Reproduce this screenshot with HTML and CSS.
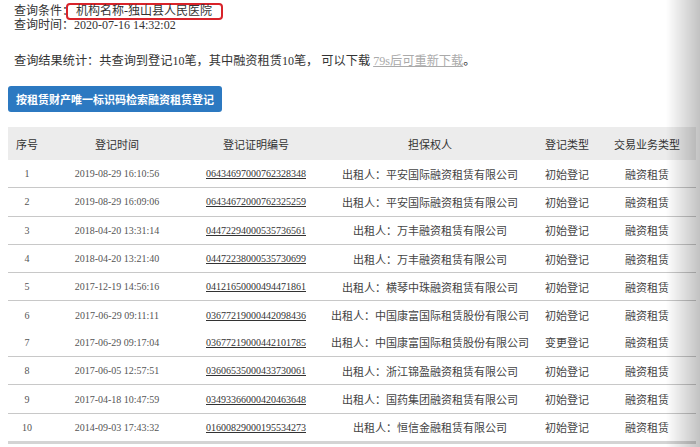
FILE: index.html
```html
<!DOCTYPE html>
<html lang="zh-CN">
<head>
    <meta charset="UTF-8">
    <title>查询结果</title>
    <link rel="stylesheet" href="styles.css">
</head>
<body>
    <div class="query-info">
        <div class="line">查询条件：<span class="mark">机构名称-独山县人民医院</span></div>
        <div class="line">查询时间：<span class="num-top">2020-07-16 14:32:02</span></div>
        <div class="line summary">查询结果统计：共查询到登记<span class="num-top">10</span>笔，其中融资租赁<span class="num-top">10</span>笔， 可以下载 <a class="wait-link">79s后可重新下载</a>。</div>
    </div>

    <button class="search-btn">按租赁财产唯一标识码检索融资租赁登记</button>

    <table class="result-table">
        <colgroup>
            <col style="width: 38px">
            <col style="width: 142px">
            <col style="width: 136px">
            <col style="width: 212px">
            <col style="width: 62px">
            <col style="width: 98px">
        </colgroup>
        <thead>
            <tr>
                <th>序号</th>
                <th>登记时间</th>
                <th>登记证明编号</th>
                <th>担保权人</th>
                <th>登记类型</th>
                <th>交易业务类型</th>
            </tr>
        </thead>
        <tbody id="rows"></tbody>
    </table>

    <script>
        const records = [
            ['1', '2019-08-29 16:10:56', '06434697000762328348', '出租人：平安国际融资租赁有限公司', '初始登记'],
            ['2', '2019-08-29 16:09:06', '06434672000762325259', '出租人：平安国际融资租赁有限公司', '初始登记'],
            ['3', '2018-04-20 13:31:14', '04472294000535736561', '出租人：万丰融资租赁有限公司', '初始登记'],
            ['4', '2018-04-20 13:21:40', '04472238000535730699', '出租人：万丰融资租赁有限公司', '初始登记'],
            ['5', '2017-12-19 14:56:16', '04121650000494471861', '出租人：横琴中珠融资租赁有限公司', '初始登记'],
            ['6', '2017-06-29 09:11:11', '03677219000442098436', '出租人：中国康富国际租赁股份有限公司', '初始登记'],
            ['7', '2017-06-29 09:17:04', '03677219000442101785', '出租人：中国康富国际租赁股份有限公司', '变更登记'],
            ['8', '2017-06-05 12:57:51', '03606535000433730061', '出租人：浙江锦盈融资租赁有限公司', '初始登记'],
            ['9', '2017-04-18 10:47:59', '03493366000420463648', '出租人：国药集团融资租赁有限公司', '初始登记'],
            ['10', '2014-09-03 17:43:32', '01600829000195534273', '出租人：恒信金融租赁有限公司', '初始登记']
        ];

        const tbody = document.getElementById('rows');
        records.forEach(r => {
            const tr = document.createElement('tr');
            // row 6 and 7 belong to the same lease, no divider between them
            if (r[0] === '7') tr.className = 'joined';
            tr.innerHTML =
                `<td class="num">${r[0]}</td>` +
                `<td class="num">${r[1]}</td>` +
                `<td class="num"><a class="cert">${r[2]}</a></td>` +
                `<td>${r[3]}</td>` +
                `<td>${r[4]}</td>` +
                `<td>融资租赁</td>`;
            tbody.appendChild(tr);
        });
    </script>
</body>
</html>
```

FILE: styles.css
```css
body {
    margin: 0;
    padding: 4px 0 0 8px;
    font-family: "Liberation Serif", "Noto Sans CJK SC", serif;
    color: #333;
    background: #fff;
    overflow: hidden;
}
body::after {
    content: "";
    position: fixed;
    top: 0;
    right: 0;
    width: 34px;
    height: 100%;
    background: linear-gradient(to right, rgba(0, 0, 0, 0), rgba(0, 0, 0, 0.24));
    pointer-events: none;
}
.query-info {
    padding-left: 6px;
    font-size: 12px;
}
.line {
    height: 14px;
    line-height: 14px;
    white-space: nowrap;
}
.summary {
    margin-top: 22px;
    font-size: 12.2px;
}
.num-top {
    font-size: 12px;
}
.mark {
    display: inline-block;
    vertical-align: top;
    margin-top: -1px;
    height: 13px;
    line-height: 13px;
    padding: 0 9px 0 8px;
    margin-left: -8px;
    border: 2px solid #d8232a;
    border-radius: 4px;
}
.wait-link {
    color: #aaa;
    text-decoration: underline;
}
.search-btn {
    display: block;
    margin-top: 18px;
    height: 26px;
    padding: 0 8px;
    background-color: #2c79c1;
    color: #fff;
    border: none;
    border-radius: 3px;
    font-family: "Noto Sans CJK SC", sans-serif;
    font-size: 11px;
    font-weight: bold;
}
.result-table {
    margin-top: 15px;
    width: 688px;
    table-layout: fixed;
    border-collapse: collapse;
    font-size: 11px;
    border-bottom: 3px solid #d4d4d4;
}
.result-table th {
    height: 33px;
    padding: 0;
    background-color: #ececec;
    font-weight: normal;
    color: #333;
    font-size: 11px;
}
.result-table td {
    height: 27.3px;
    padding: 0;
    text-align: center;
    color: #444;
    border-top: 1px solid #c8c8c8;
    white-space: nowrap;
}
.result-table tbody tr:first-child td {
    border-top: none;
}
.result-table tr.joined td {
    border-top: none;
}
.result-table td.num {
    font-size: 10px;
    color: #555;
}
.cert {
    color: #333;
    text-decoration: underline;
}
```
